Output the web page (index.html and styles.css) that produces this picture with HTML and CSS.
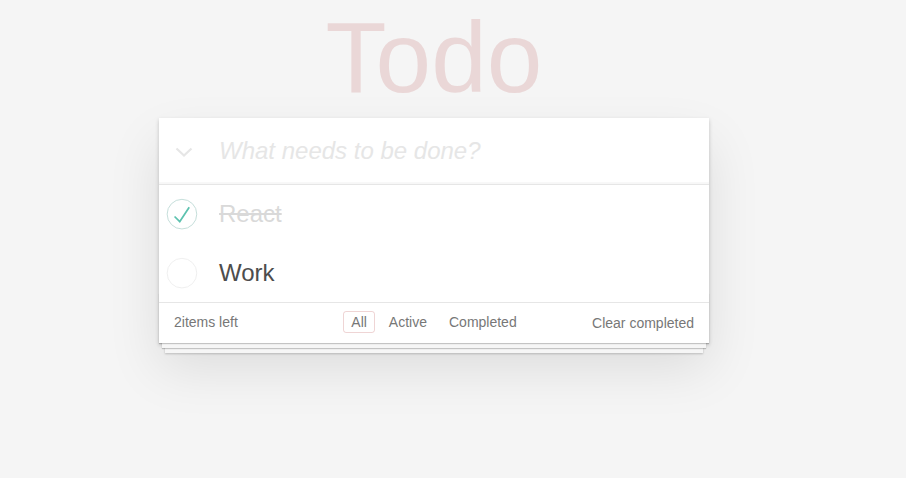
FILE: index.html
```html
<!DOCTYPE html>
<html lang="en">
<head>
<meta charset="utf-8">
<title>Todo</title>
<link rel="stylesheet" href="styles.css">
</head>
<body>
<div class="page">
  <h1 class="title">Todo</h1>
  <section class="todoapp">
    <header class="header">
      <button class="toggle-all" type="button" aria-label="Toggle all">
        <svg width="18" height="11" viewBox="0 0 18 11"><polyline points="1.5,1.5 9,8.5 16.5,1.5" fill="none" stroke="#e6e6e6" stroke-width="2.2"/></svg>
      </button>
      <input class="new-todo" placeholder="What needs to be done?">
    </header>
    <ul class="todo-list">
      <li class="todo completed">
        <span class="toggle">
          <svg width="40" height="40" viewBox="-10 -18 100 135"><circle cx="50" cy="50" r="50" fill="none" stroke="#bddad5" stroke-width="3"/><path fill="#5dc2af" d="M72 25L42 71 27 56l-4 4 20 20 34-52z"/></svg>
        </span>
        <label class="todo-label">React</label>
      </li>
      <li class="todo">
        <span class="toggle">
          <svg width="40" height="40" viewBox="-10 -18 100 135"><circle cx="50" cy="50" r="50" fill="none" stroke="#ededed" stroke-width="3"/></svg>
        </span>
        <label class="todo-label">Work</label>
      </li>
    </ul>
    <footer class="footer">
      <span class="todo-count">2items left</span>
      <ul class="filters">
        <li><a class="filter selected">All</a></li>
        <li><a class="filter">Active</a></li>
        <li><a class="filter">Completed</a></li>
      </ul>
      <button class="clear-completed" type="button">Clear completed</button>
    </footer>
  </section>
</div>
</body>
</html>
```
FILE: styles.css
```css
html, body {
  margin: 0;
  padding: 0;
}
body {
  background: #f5f5f5;
  font-family: "Liberation Sans", Arial, sans-serif;
  color: #4d4d4d;
  font-size: 14px;
  line-height: 1.4em;
  min-height: 100vh;
}
.page {
  width: 868px;
  min-height: 478px;
}
.title {
  margin: 0;
  font-size: 100px;
  font-weight: 400;
  line-height: normal;
  text-align: center;
  color: rgba(175, 47, 47, 0.15);
  height: 115px;
}
.todoapp {
  position: relative;
  width: 550px;
  margin: 3px auto 40px;
  background: #fff;
  box-shadow: 0 2px 4px 0 rgba(0, 0, 0, 0.2), 0 25px 50px 0 rgba(0, 0, 0, 0.1);
}
.header {
  display: flex;
  align-items: stretch;
  box-shadow: inset 0 -2px 1px rgba(0, 0, 0, 0.03);
}
.toggle-all {
  width: 60px;
  flex: none;
  border: 0;
  background: transparent;
  padding: 0 0 0 16px;
  display: flex;
  align-items: center;
  justify-content: flex-start;
}
.toggle-all svg {
  margin-top: 2px;
}
.new-todo {
  flex: 1;
  min-width: 0;
  border: 0;
  outline: none;
  background: transparent;
  margin: 0;
  padding: 16px 16px 16px 0;
  font-family: inherit;
  font-size: 24px;
  line-height: 1.4em;
  height: 66px;
  box-sizing: border-box;
  color: inherit;
}
.new-todo::placeholder {
  font-style: italic;
  font-weight: 300;
  color: #e6e6e6;
}
.todo-list {
  margin: 0;
  padding: 0;
  list-style: none;
  border-top: 1px solid #e6e6e6;
}
.todo {
  display: flex;
  align-items: center;
  font-size: 24px;
}
.toggle {
  width: 60px;
  flex: none;
  display: flex;
  align-items: center;
}
.todo-label {
  flex: 1;
  padding: 15px 15px 15px 0;
  line-height: 1.2;
  height: 28.5px;
  color: #4d4d4d;
}
.completed .todo-label {
  color: #d9d9d9;
  text-decoration: line-through;
}
.footer {
  position: relative;
  display: grid;
  grid-template-columns: 1fr auto 1fr;
  align-items: center;
  color: #777;
  padding: 10px 15px;
  height: 20px;
  border-top: 1px solid #e6e6e6;
  background: #fff;
}
.footer::before {
  content: "";
  position: absolute;
  right: 0;
  bottom: 0;
  left: 0;
  height: 50px;
  overflow: hidden;
  pointer-events: none;
  box-shadow: 0 1px 1px rgba(0, 0, 0, 0.2),
              0 8px 0 -3px #f6f6f6,
              0 9px 1px -3px rgba(0, 0, 0, 0.2),
              0 16px 0 -6px #f6f6f6,
              0 17px 2px -6px rgba(0, 0, 0, 0.2);
}
.todo-count {
  justify-self: start;
  line-height: 20px;
  margin-top: -2px;
}
.filters {
  display: flex;
  margin: -3px 0 0;
  padding: 0;
  list-style: none;
}
.filter {
  display: block;
  margin: 0 3px;
  padding: 1px 7px;
  line-height: 18px;
  border: 1px solid transparent;
  border-radius: 3px;
  color: inherit;
}
.filter.selected {
  border-color: rgba(175, 47, 47, 0.2);
}
.clear-completed {
  justify-self: end;
  border: 0;
  background: none;
  padding: 0;
  font-family: inherit;
  font-size: 14px;
  line-height: 20px;
  color: inherit;
  cursor: pointer;
}
```
